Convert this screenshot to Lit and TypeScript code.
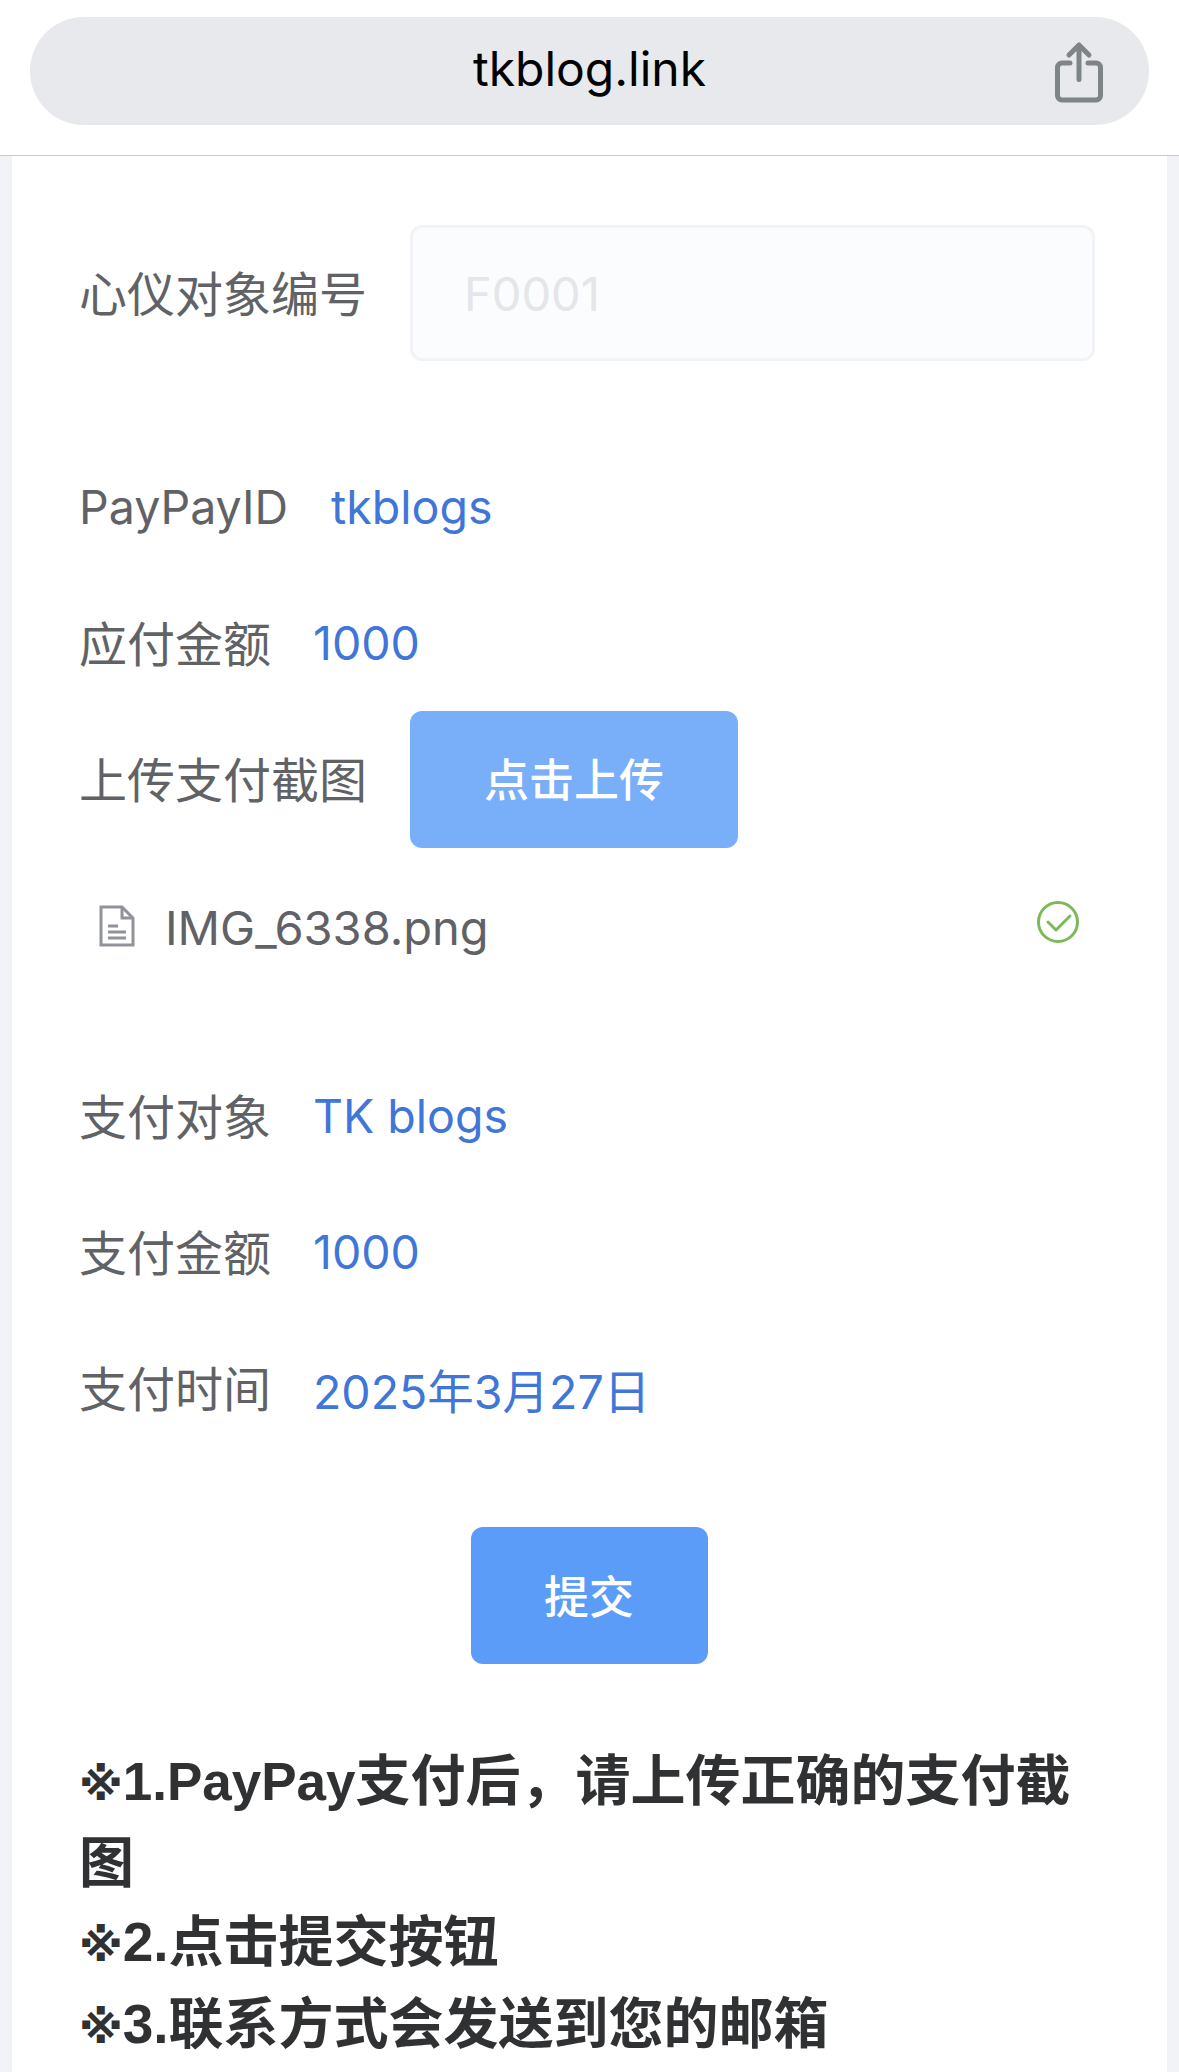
import { LitElement, html, css } from 'lit';
import { customElement } from 'lit/decorators.js';

const ROWS_TOP = [
  { label: 'PayPayID', value: 'tkblogs' },
  { label: '应付金额', value: '1000' },
];
const ROWS_BOTTOM = [
  { label: '支付对象', value: 'TK blogs' },
  { label: '支付金额', value: '1000' },
  { label: '支付时间', value: '2025年3月27日' },
];

@customElement('app-root')
export class AppRoot extends LitElement {
  static styles = css`
    :host {
      display: block;
      height: 2072px;
      overflow: hidden;
      background: #f2f3f7;
      font-family: Inter, "Noto Sans CJK SC", sans-serif;
    }
    .bar {
      box-sizing: border-box;
      height: 156px;
      padding: 17px 30px 0;
      background: #fff;
      border-bottom: 1px solid #c9c9c9;
    }
    .pill {
      box-sizing: border-box;
      position: relative;
      height: 108px;
      padding-bottom: 5px;
      border-radius: 54px;
      background: #e8e9ec;
      display: flex;
      align-items: center;
      justify-content: center;
      font-family: Inter, sans-serif;
      font-size: 48px;
      color: #000;
    }
    .share {
      position: absolute;
      left: 1022px;
      top: 24px;
      width: 54px;
      height: 64px;
    }
    .card {
      box-sizing: border-box;
      height: 1916px;
      margin: 0 12px;
      padding: 69px 68px 0 67px;
      background: #fff;
    }
    .row {
      display: flex;
      align-items: center;
      gap: 42px;
      height: 136px;
      font-size: 46.5px;
    }
    .wide {
      gap: 43px;
    }
    .label {
      color: #606266;
    }
    .cjk {
      font-family: "Noto Sans CJK SC", sans-serif;
      font-size: 48px;
      line-height: 1;
      padding-bottom: 5px;
    }
    .value {
      color: #3f76d8;
    }
    .input {
      box-sizing: border-box;
      display: flex;
      align-items: center;
      width: 685px;
      height: 136px;
      padding-left: 51px;
      border: 3px solid #f2f3f6;
      border-radius: 12px;
      background: #fbfcfd;
      font-size: 47px;
      color: #e4e6ea;
    }
    .first {
      margin-bottom: 78px;
    }
    .btn {
      box-sizing: border-box;
      display: flex;
      align-items: center;
      justify-content: center;
      height: 137px;
      padding-bottom: 3px;
      border-radius: 12px;
      font-family: "Noto Sans CJK SC", sans-serif;
      font-size: 45px;
      font-weight: 500;
      color: #fff;
    }
    .upload {
      width: 328px;
      background: #79aef8;
    }
    .submit {
      width: 237px;
      margin: 71px auto 0;
      background: #5b9cf8;
    }
    .file {
      display: flex;
      align-items: center;
      height: 68px;
      margin: 46px 0 87px;
      padding: 0 20px 0 20px;
      font-size: 47px;
      color: #606266;
    }
    .file-icon {
      margin-top: -2px;
    }
    .file-name {
      flex: 1;
      margin-left: 30px;
    }
    .check {
      margin-top: -10px;
    }
    .notes {
      margin-top: 78px;
      font-family: "Liberation Sans", "Noto Sans CJK SC", sans-serif;
      font-size: 55px;
      line-height: 79px;
      font-weight: 700;
      color: #303133;
    }
    .mark {
      font-family: "DejaVu Sans", sans-serif;
      font-size: 45px;
    }
    .latin {
      font-size: 53px;
    }
  `;

  private row(r: { label: string; value: string }) {
    const latin = r.label === 'PayPayID';
    return html`<div class="row ${latin ? 'wide' : ''}">
      <span class="label ${latin ? '' : 'cjk'}">${r.label}</span>
      <span class="value">${r.value}</span>
    </div>`;
  }

  render() {
    return html`
      <div class="bar">
        <div class="pill">
          tkblog.link
          <svg class="share" viewBox="0 0 54 64" fill="none" stroke="#7f8487" stroke-width="5" stroke-linecap="round" stroke-linejoin="round">
            <path d="M18 22H10a4.5 4.5 0 0 0-4.5 4.5v28a4.5 4.5 0 0 0 4.5 4.5h34a4.5 4.5 0 0 0 4.5-4.5v-28a4.5 4.5 0 0 0-4.5-4.5h-8" />
            <path d="M27 38.5V5M17 14 27 4l10 10" />
          </svg>
        </div>
      </div>
      <div class="card">
        <div class="row first wide">
          <span class="label cjk">心仪对象编号</span>
          <div class="input">F0001</div>
        </div>
        ${ROWS_TOP.map((r) => this.row(r))}
        <div class="row wide">
          <span class="label cjk">上传支付截图</span>
          <div class="btn upload">点击上传</div>
        </div>
        <div class="file">
          <svg class="file-icon" width="36" height="42" viewBox="0 0 36 42" fill="none" stroke="#909399" stroke-width="3">
            <path d="M2 2h21l11 11v27H2z" />
            <path d="M23 2v11h11M9 21h10M9 27h18M9 33h18" />
          </svg>
          <span class="file-name">IMG_6338.png</span>
          <svg class="check" width="42" height="42" viewBox="0 0 42 42" fill="none" stroke="#7cba59">
            <circle cx="21" cy="21" r="19.5" stroke-width="3" />
            <path d="M11 21l8 8 14-14" stroke-width="3" stroke-linecap="round" stroke-linejoin="round" />
          </svg>
        </div>
        ${ROWS_BOTTOM.map((r) => this.row(r))}
        <div class="btn submit">提交</div>
        <div class="notes">
          <span class="mark">※</span><span class="latin">1.PayPay</span>支付后，请上传正确的支付截<br />
          图<br />
          <span class="mark">※</span>2.点击提交按钮<br />
          <span class="mark">※</span>3.联系方式会发送到您的邮箱
        </div>
      </div>
    `;
  }
}
